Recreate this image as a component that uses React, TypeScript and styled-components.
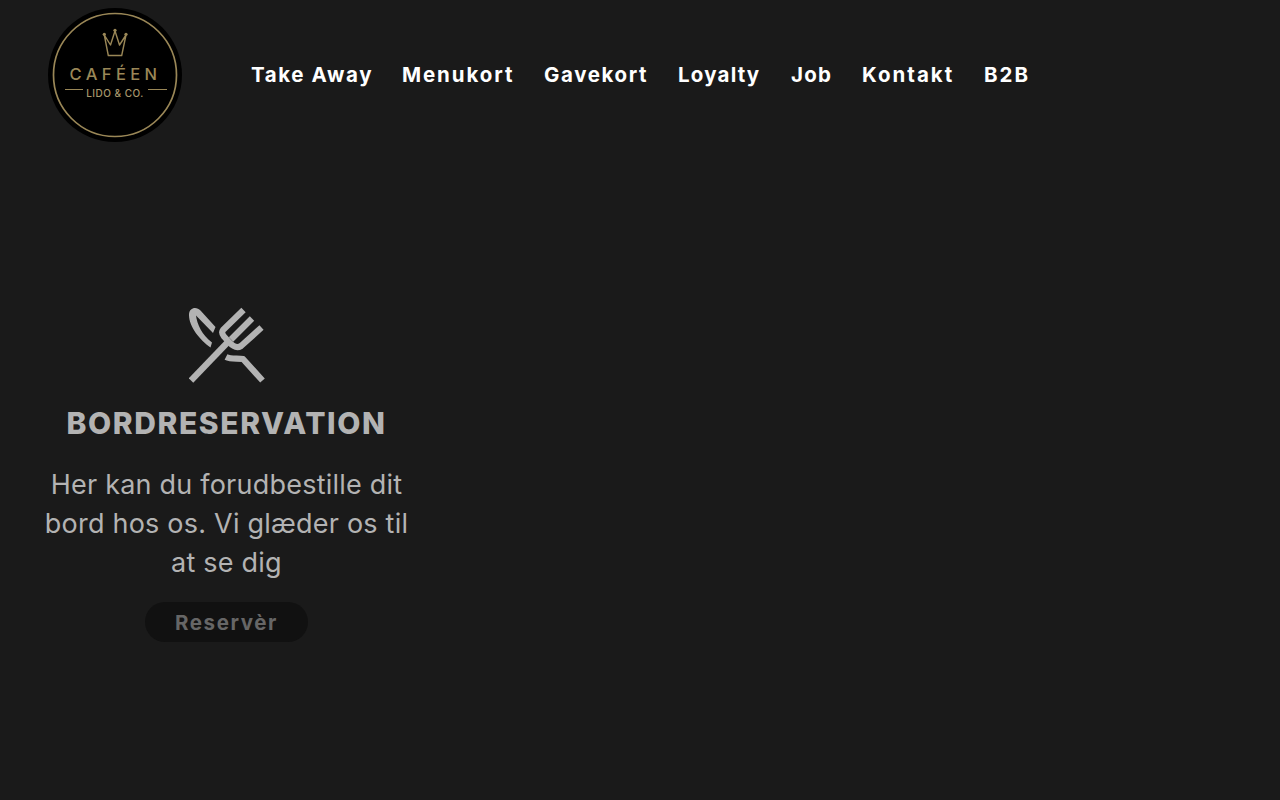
import React from "react";
import styled, { createGlobalStyle } from "styled-components";

const GlobalStyle = createGlobalStyle`
  html, body {
    margin: 0;
    padding: 0;
    background: #1a1a1a;
  }

  body {
    font-family: "Inter", "Liberation Sans", sans-serif;
  }
`;

// width + spacing per link, Montserrat isn't available so the run-lengths are tuned by hand
const navigations = [
  { title: "Take Away", width: 121, spacing: 1.6 },
  { title: "Menukort", width: 112, spacing: 1.9 },
  { title: "Gavekort", width: 104, spacing: 1.6 },
  { title: "Loyalty", width: 83, spacing: 1.2 },
  { title: "Job", width: 41, spacing: 1.25 },
  { title: "Kontakt", width: 92, spacing: 2 },
  { title: "B2B", width: 45, spacing: 1.95 },
];

function Logo() {
  return (
    <LogoSvg viewBox="0 0 134 134" width="134" height="134" aria-label="Caféen Lido & Co.">
      <circle cx="67" cy="67" r="67" fill="#000" />
      <circle cx="67" cy="67" r="61.5" fill="none" stroke="#9a8757" strokeWidth="1.7" />
      <path
        d="M60.3 47.5 L56.3 27 L62.5 37 L67 23 L71.5 37 L78 27 L73.7 47.5 Z"
        fill="none"
        stroke="#9a8757"
        strokeWidth="1.4"
        strokeLinejoin="round"
      />
      <circle cx="56.3" cy="26.3" r="1.6" fill="#9a8757" />
      <circle cx="67" cy="22.3" r="1.6" fill="#9a8757" />
      <circle cx="78" cy="26.3" r="1.6" fill="#9a8757" />
      <LogoTitle x="67.5" y="72" textAnchor="middle">
        CAFÉEN
      </LogoTitle>
      <LogoSub x="67" y="88.5" textAnchor="middle">
        LIDO &amp; CO.
      </LogoSub>
      <path d="M17 81.5 H35 M100 81.5 H119" stroke="#9a8757" strokeWidth="1" />
    </LogoSvg>
  );
}

function CutleryIcon() {
  return (
    <Icon viewBox="0 0 76 76" width="76" height="76" aria-hidden="true">
      <path
        fill="#b3b3b3"
        d="M21.5 40.5 C11 33 0 20 0 8 C0 3 3 1 6 1 C8 1 10 2 11.5 3.5 L26.5 20 L24 26 L7 8.5 C8 17 13 28 23 35.5 Z"
      />
      <g fill="none" stroke="#b3b3b3" strokeWidth="6.2" strokeLinejoin="round">
        <path d="M2 73.5 L38 36" />
        <path d="M54.5 3 L34 23 C32.5 25 33 27 35 29.5 L40 35 C44 39.5 48 41.5 52 39 L72.5 20.5" />
        <path d="M63 11.5 L42 32.5" />
        <path d="M37 50 C42 52.5 49 51 54 52 L73.5 73.5" />
      </g>
    </Icon>
  );
}

export default function App() {
  return (
    <Page>
      <GlobalStyle />
      <Header>
        <Logo />
        <Nav>
          {navigations.map((nav) => (
            <NavLink key={nav.title} href="#" $width={nav.width} $spacing={nav.spacing}>
              {nav.title}
            </NavLink>
          ))}
        </Nav>
      </Header>
      <Main>
        <ReservationCard>
          <CutleryIcon />
          <Heading>BORDRESERVATION</Heading>
          <Description>Her kan du forudbestille dit bord hos os. Vi glæder os til at se dig</Description>
          <ReserveButton>Reservèr</ReserveButton>
        </ReservationCard>
      </Main>
    </Page>
  );
}

const Page = styled.div`
  min-height: 800px;
  background: #1a1a1a;
  overflow: hidden;
`;

const Header = styled.header`
  display: flex;
  align-items: center;
  height: 150px;
  padding-left: 48px;
`;

const LogoSvg = styled.svg`
  display: block;
  flex: none;
`;

const LogoTitle = styled.text`
  font-family: "Inter", sans-serif;
  font-size: 16.5px;
  font-weight: 500;
  letter-spacing: 4.4px;
  fill: #9a8757;
`;

const LogoSub = styled.text`
  font-family: "Inter", sans-serif;
  font-size: 10px;
  font-weight: 500;
  letter-spacing: 0.5px;
  fill: #a8986c;
`;

const Nav = styled.nav`
  display: flex;
  align-items: center;
  gap: 30px;
  margin-left: 69px;
`;

const NavLink = styled.a<{ $width: number; $spacing: number }>`
  flex: none;
  width: ${(p) => p.$width}px;
  color: #fff;
  font-size: 20.5px;
  font-weight: 700;
  letter-spacing: ${(p) => p.$spacing}px;
  line-height: 24px;
  text-decoration: none;
  white-space: nowrap;
`;

const Main = styled.main`
  padding-top: 157px;
`;

const ReservationCard = styled.section`
  display: flex;
  flex-direction: column;
  align-items: center;
  width: 453px;
`;

const Icon = styled.svg`
  display: block;
`;

const Heading = styled.h2`
  margin: 22px 0 0;
  color: #b3b3b3;
  font-size: 30px;
  font-weight: 800;
  line-height: 36px;
  letter-spacing: 1.6px;
`;

const Description = styled.p`
  width: 372px;
  margin: 24px 0 0;
  color: #b3b3b3;
  font-size: 27px;
  font-weight: 400;
  line-height: 39px;
  letter-spacing: 0.22px;
  text-align: center;
`;

const ReserveButton = styled.button`
  width: 163px;
  height: 40px;
  margin-top: 20px;
  padding: 0;
  border: 0;
  border-radius: 20px;
  background: #111;
  color: #666;
  font-family: inherit;
  font-size: 20.5px;
  font-weight: 700;
  letter-spacing: 1.6px;
`;
